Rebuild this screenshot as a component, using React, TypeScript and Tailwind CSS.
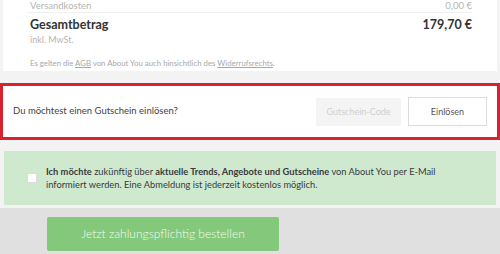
import React from "react";

const font = { fontFamily: "Lato, 'Noto Sans', sans-serif" };

export default function App() {
  return (
    <div className="h-[254px] w-[500px] overflow-hidden bg-[#f3f3f3] text-[#333]" style={font}>
      {/* Summary */}
      <div className="mx-[3px] h-[71px] bg-white pl-[24px] pr-[25px]">
        <div className="flex h-[13px] items-start justify-between border-b border-[#f0f0f0] pl-[3px] pt-px text-[9.5px] leading-[10px] text-[#b5b5b5]">
          <span>Versandkosten</span>
          <span>0,00 €</span>
        </div>
        <div className="mt-[5px] flex items-center justify-between pl-[3px] text-[12.5px] font-bold leading-[14px] text-[#333]">
          <span>Gesamtbetrag</span>
          <span>179,70 €</span>
        </div>
        <div className="mt-[3px] pl-[3px] text-[9px] leading-[10px] text-[#b5b5b5]">inkl. MwSt.</div>
        <div className="mt-[14px] pl-[3px] text-[7.8px] leading-[8px] text-[#a8a8a8]">
          Es gelten die <span className="underline">AGB</span> von About You auch hinsichtlich des{" "}
          <span className="underline">Widerrufsrechts</span>.
        </div>
      </div>

      {/* Voucher */}
      <div className="mt-[12px] flex h-[57px] items-center border-[3px] border-[#d8222f] bg-white pl-[10px] pr-[10px]">
        <span className="flex-1 text-[9.5px] text-[#444]">Du möchtest einen Gutschein einlösen?</span>
        <div className="flex h-[28px] w-[85px] items-center justify-center bg-[#f4f4f4] text-[9px] text-[#cfcfcf]">
          Gutschein-Code
        </div>
        <button className="ml-[7px] flex h-[29px] w-[79px] items-center justify-center border border-[#dcdcdc] bg-white text-[9px] text-[#555]">
          Einlösen
        </button>
      </div>

      {/* Newsletter */}
      <div className="mx-[4px] mt-[11px] flex h-[54px] items-center bg-[#cfe9cf] pl-[23px]">
        <div className="mr-[9px] h-[10px] w-[10px] shrink-0 border border-[#ddd] bg-white" />
        <p className="text-[9.3px] leading-[13px] text-[#3a3a3a]">
          <b>Ich möchte</b> zukünftig über <b>aktuelle Trends, Angebote und Gutscheine</b> von About You per E-Mail
          <br />
          informiert werden. Eine Abmeldung ist jederzeit kostenlos möglich.
        </p>
      </div>

      {/* Order */}
      <div className="mt-[3px] h-[50px] bg-[#e0e0e0] pl-[47px] pt-[9px]">
        <button className="flex h-[34px] w-[232px] items-center justify-center rounded-[2px] bg-[#84c87b] text-[12px] font-light text-[#f4fbf3]">
          Jetzt zahlungspflichtig bestellen
        </button>
      </div>
    </div>
  );
}
